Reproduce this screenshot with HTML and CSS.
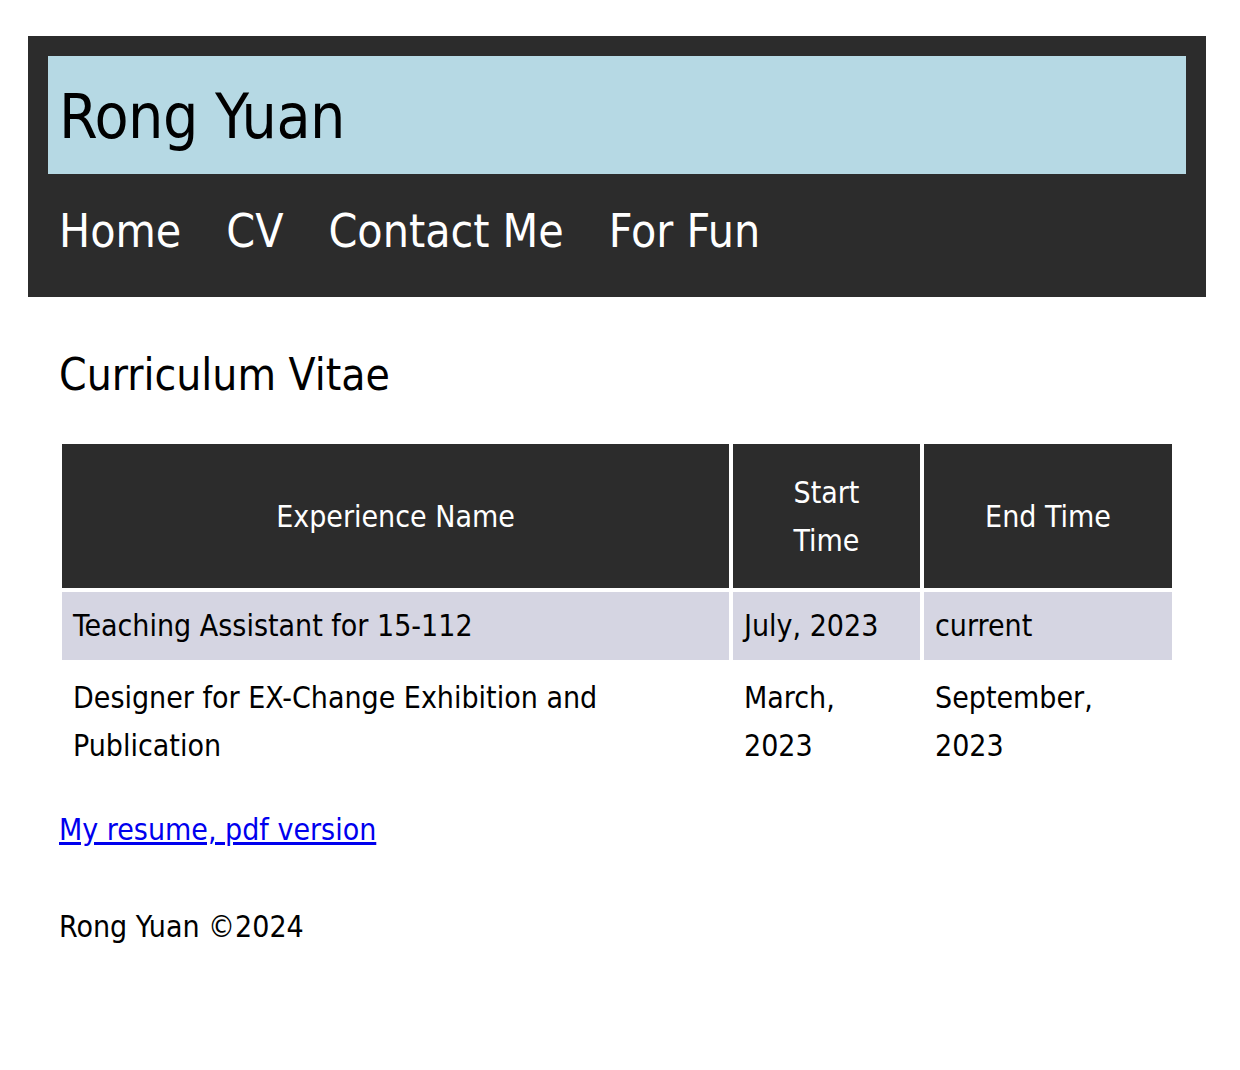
FILE: index.html
```html
<!DOCTYPE html>
<html lang="en">
<head>
<meta charset="utf-8">
<title>Rong Yuan - CV</title>
<link rel="stylesheet" href="styles.css">
</head>
<body>
<header class="site-header">
  <div class="banner"><h1 class="site-title">Rong Yuan</h1></div>
  <nav class="nav">
    <a href="#">Home</a>
    <a href="#">CV</a>
    <a href="#">Contact Me</a>
    <a href="#">For Fun</a>
  </nav>
</header>
<main class="content">
  <h2 class="page-title">Curriculum Vitae</h2>
  <table class="cv">
    <thead>
      <tr>
        <th class="c1">Experience Name</th>
        <th class="c2">Start Time</th>
        <th class="c3">End Time</th>
      </tr>
    </thead>
    <tbody>
      <tr class="odd">
        <td>Teaching Assistant for 15-112</td>
        <td>July, 2023</td>
        <td>current</td>
      </tr>
      <tr>
        <td>Designer for EX-Change Exhibition and Publication</td>
        <td>March, 2023</td>
        <td>September, 2023</td>
      </tr>
    </tbody>
  </table>
  <p class="resume"><a href="#">My resume, pdf version</a></p>
  <footer class="footer">Rong Yuan ©2024</footer>
</main>
</body>
</html>
```
FILE: styles.css
```css
html, body {
  margin: 0;
  padding: 0;
  background: #ffffff;
}
body {
  font-family: "Liberation Sans Narrow", "DejaVu Sans Condensed", "Liberation Sans", sans-serif;
  color: #000;
  font-size: 30px;
  line-height: 48px;
}
.site-header {
  margin: 36px 0 0 28px;
  width: 1178px;
  box-sizing: border-box;
  background: #2c2c2c;
  padding: 20px 20px 0 20px;
}
.banner {
  background: #b6d9e4;
  height: 118px;
  display: flex;
  align-items: center;
  padding-left: 11px;
}
.site-title {
  margin: 0;
  font-weight: normal;
  font-size: 62px;
  line-height: 64px;
  letter-spacing: -0.5px;
  padding-top: 4px;
}
.nav {
  height: 123px;
  display: flex;
  align-items: center;
  gap: 45px;
  padding-left: 11px;
}
.nav a {
  color: #ffffff;
  text-decoration: none;
  font-size: 46px;
  line-height: 48px;
  margin-top: -10px;
}
.content {
  margin-left: 58px;
  width: 1118px;
}
.page-title {
  margin: 50px 0 0 1px;
  font-weight: normal;
  font-size: 44px;
  line-height: 56px;
}
.cv {
  margin-top: 37px;
  border-spacing: 4px;
  width: 1118px;
  table-layout: fixed;
}
.cv th {
  background: #2c2c2c;
  color: #ffffff;
  font-weight: normal;
  text-align: center;
  padding: 25px 26px 23px;
}
.c1 { width: 615px; }
.c2 { width: 135px; }
.c3 { width: 196px; }
.cv td {
  padding: 10px 11px;
  vertical-align: middle;
}
.cv tr.odd td {
  background: #d5d5e2;
}
.resume {
  margin: 22px 0 0 1px;
}
.resume a {
  color: #0000ee;
}
.footer {
  margin: 49px 0 0 1px;
}
```
